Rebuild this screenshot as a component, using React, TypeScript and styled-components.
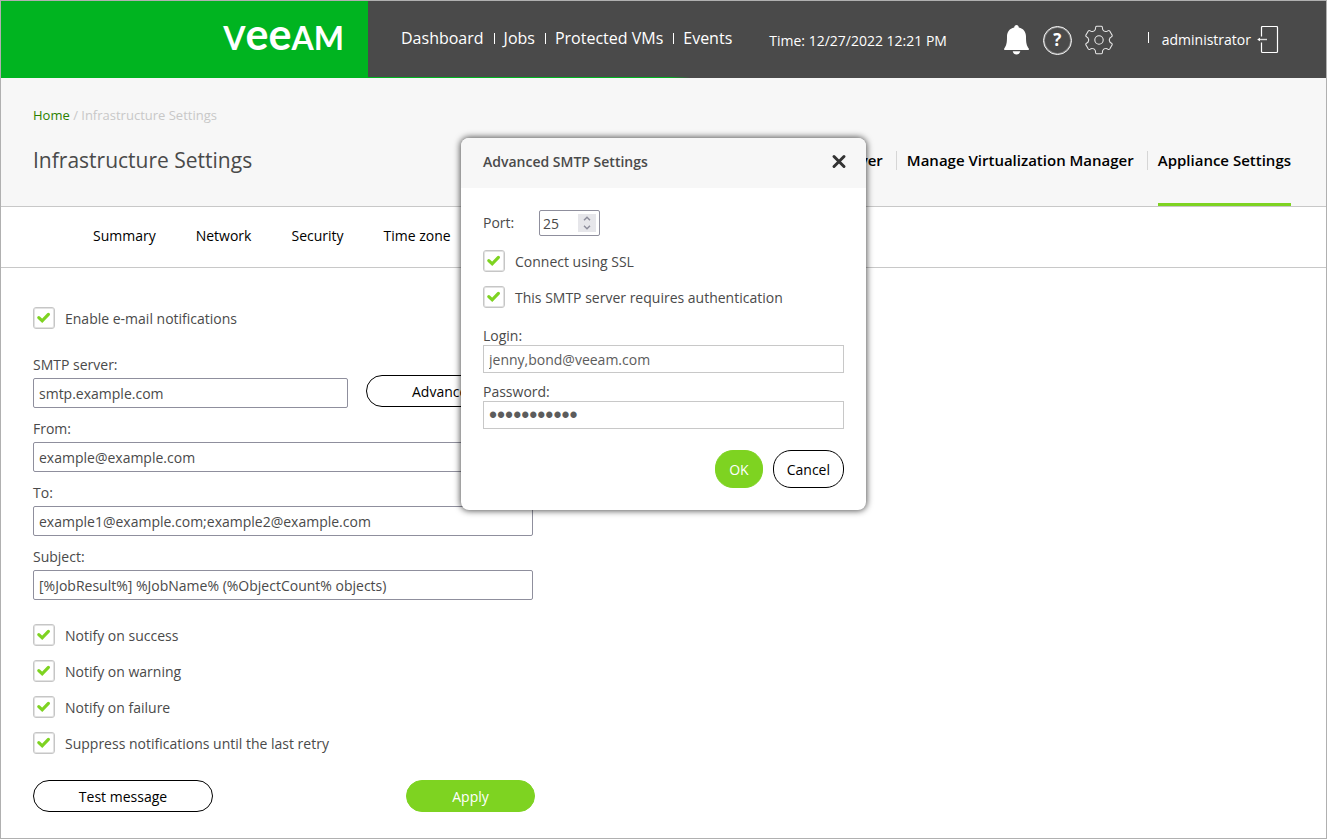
import React, { useState } from 'react';
import styled, { createGlobalStyle } from 'styled-components';

const GlobalStyle = createGlobalStyle`
  *, *::before, *::after { box-sizing: border-box; }
  body {
    margin: 0;
    background: #ffffff;
    color: #4a4a4a;
    font-family: "Open Sans", "Noto Sans", sans-serif;
    font-size: 14px;
    line-height: 20px;
  }
  button, input { font-family: inherit; font-size: 14px; line-height: 20px; }
  a { text-decoration: none; }
`;

const Page = styled.div`
  min-height: 100vh;
  border: 1px solid #b0b0b0;
`;

const TopBar = styled.header`
  position: relative;
  display: flex;
  align-items: stretch;
  height: 77px;
  background: #4a4a4a;
  color: #ffffff;

  &::after {
    content: "";
    position: absolute;
    left: 0;
    bottom: 0;
    width: 52%;
    height: 1px;
    background: linear-gradient(to right, #00b420 97%, #4a4a4a);
  }
`;

const Brand = styled.a`
  display: flex;
  justify-content: flex-end;
  flex: 0 0 367px;
  padding: 11px 24px 0 0;
  background: #00b420;
  color: #ffffff;
`;

const Wordmark = styled.span`
  font-family: Lato, sans-serif;
  font-size: 32px;
  font-weight: 700;
  line-height: 44px;
  white-space: nowrap;
`;

const TallLetters = styled.span`
  font-size: 43px;
  line-height: 44px;
`;

const MainNav = styled.nav`
  display: flex;
  align-items: center;
  padding: 0 0 3px 33px;
  font-size: 16px;
`;

const NavLink = styled.a`
  color: #ffffff;
  white-space: nowrap;

  & + &::before {
    content: "";
    display: inline-block;
    width: 1px;
    height: 11px;
    margin: 0 9px 0 10px;
    background: #ffffff;
  }
`;

const Clock = styled.div`
  align-self: center;
  margin: 2px 0 0 37px;
  white-space: nowrap;
`;

const Tools = styled.div`
  display: flex;
  align-items: center;
  gap: 12px;
  margin: 1px 0 0 auto;
`;

const IconButton = styled.button`
  display: flex;
  padding: 0;
  border: 0;
  background: none;
  color: inherit;
  cursor: pointer;
`;

const Account = styled.div`
  display: flex;
  align-items: center;
  gap: 6px;
  margin: 0 47px 0 34px;

  &::before {
    content: "";
    width: 1px;
    height: 11px;
    margin: 0 7px 5px 0;
    background: #ffffff;
  }
`;

const PageHead = styled.section`
  height: 129px;
  padding: 27px 35px 0 32px;
  background: #f7f7f7;
  border-bottom: 1px solid #c8c8c8;
`;

const Breadcrumb = styled.nav`
  font-size: 13px;
  color: #c8c8c8;
`;

const HomeLink = styled.a`
  color: #2a8000;
`;

const TitleRow = styled.div`
  display: flex;
  justify-content: space-between;
  padding-top: 20px;
`;

const Title = styled.h1`
  margin: 0;
  font-size: 21px;
  font-weight: 400;
  line-height: 30px;
`;

const SectionTabs = styled.nav`
  display: flex;
`;

const SectionTab = styled.a<{ $active?: boolean }>`
  height: 61px;
  border-bottom: 3px solid ${(p) => (p.$active ? '#7ed321' : 'transparent')};
  color: #000000;
  font-size: 15px;
  font-weight: 600;
  line-height: 30px;
  white-space: nowrap;
`;

const TabDivider = styled.span`
  width: 1px;
  height: 19px;
  margin: 6px 10px 0 13px;
  background: #d6d6d6;
`;

const SubNav = styled.nav`
  display: flex;
  align-items: center;
  gap: 40px;
  height: 61px;
  padding: 0 92px 2px;
  border-bottom: 1px solid #c8c8c8;
`;

const SubLink = styled.a`
  color: #000000;
`;

const Form = styled.form`
  max-width: 600px;
  padding: 39px 32px 26px;
`;

const CheckRow = styled.label`
  display: grid;
  grid-template-columns: 22px 1fr;
  column-gap: 10px;
  align-items: center;

  & + & { margin-top: 14px; }
`;

const CheckBox = styled.input`
  grid-area: 1 / 1;
  appearance: none;
  width: 22px;
  height: 22px;
  margin: 0;
  border: 1px solid #c6c6c6;
  border-radius: 3px;
  box-shadow: inset 0 0 0 1px #e2e2e2;

  &:not(:checked) + svg { visibility: hidden; }
`;

const CheckMark = styled.svg`
  grid-area: 1 / 1;
  pointer-events: none;
`;

const CheckText = styled.span`
  grid-area: 1 / 2;
  padding-top: 2px;
`;

const Fields = styled.div`
  display: flex;
  flex-direction: column;
  gap: 11px;
  max-width: 500px;
  padding: 26px 0 24px;
`;

const FieldLabel = styled.label`
  display: block;
  margin-bottom: 3px;
`;

const ServerRow = styled.div`
  display: flex;
  gap: 18px;
`;

const TextInput = styled.input`
  width: 100%;
  height: 30px;
  padding: 1px 5px 0;
  border: 1px solid #8f8f9d;
  border-radius: 2px;
  background: #ffffff;
  color: #4a4a4a;
`;

const ServerInput = styled(TextInput)`
  flex: 0 0 315px;
  width: 315px;
`;

const PillButton = styled.button<{ $primary?: boolean }>`
  height: 32px;
  padding: 2px 13px 0;
  border: 1px solid ${(p) => (p.$primary ? '#7ed321' : '#000000')};
  border-radius: 18px;
  background: ${(p) => (p.$primary ? '#7ed321' : '#ffffff')};
  color: ${(p) => (p.$primary ? '#ffffff' : '#000000')};
  cursor: pointer;
`;

const AdvancedButton = styled(PillButton)`
  flex: 1;
  margin-top: -3px;
`;

const FormActions = styled.div`
  display: flex;
  justify-content: space-between;
  max-width: 502px;
  padding-top: 26px;
`;

const TestButton = styled(PillButton)`
  width: 180px;
`;

const ApplyButton = styled(PillButton)`
  width: 129px;
`;

const Overlay = styled.div`
  position: absolute;
  top: 138px;
  left: 0;
  right: 0;
  display: flex;
  justify-content: center;
  pointer-events: none;
`;

const Dialog = styled.div`
  width: 405px;
  border-radius: 8px;
  overflow: hidden;
  background: #ffffff;
  box-shadow: 0 0 6px 1px rgba(0, 0, 0, 0.65);
  pointer-events: auto;
`;

const DialogHead = styled.div`
  display: flex;
  align-items: center;
  justify-content: space-between;
  height: 50px;
  padding: 0 19px 3px 22px;
  background: #f7f7f7;
`;

const DialogTitle = styled.h2`
  margin: 0;
  font-size: 14px;
  font-weight: 600;
  line-height: 20px;
`;

const DialogBody = styled.form`
  padding: 22px;
`;

const PortRow = styled.div`
  display: flex;
  align-items: center;
  margin-bottom: 14px;
`;

const PortLabel = styled.label`
  width: 56px;
`;

const PortBox = styled.div`
  display: flex;
  align-items: center;
  width: 61px;
  height: 26px;
  padding: 0 3px;
  border: 1px solid #8f8f9d;
  border-radius: 2px;
`;

const PortInput = styled.input`
  flex: 1;
  min-width: 0;
  height: 24px;
  padding: 1px 0 0;
  border: 0;
  background: none;
  color: #4a4a4a;
  appearance: textfield;

  &::-webkit-inner-spin-button { appearance: none; margin: 0; }
`;

const Stepper = styled.div`
  display: flex;
  flex-direction: column;
  width: 18px;
  background: #e6e6ea;
`;

const StepButton = styled(IconButton)`
  justify-content: center;
  align-items: center;
  height: 9px;
  color: #8f8f9d;
`;

const Credentials = styled.div`
  display: flex;
  flex-direction: column;
  gap: 9px;
  padding: 18px 0 21px;
`;

const TightLabel = styled.label`
  display: block;
  line-height: 19px;
`;

const DialogInput = styled.input`
  display: block;
  width: 100%;
  height: 28px;
  padding: 1px 5px 0;
  border: 1px solid #c8c8c8;
  background: #ffffff;
  color: #5c5c5c;
`;

const SecretInput = styled(DialogInput)`
  font-family: "Liberation Sans", sans-serif;
  font-size: 23px;
`;

const DialogActions = styled.div`
  display: flex;
  justify-content: flex-end;
  gap: 10px;
`;

const DialogButton = styled(PillButton)`
  height: 38px;
`;

const Bell = () => (
  <svg width="28" height="30" viewBox="0 0 28 30" fill="currentColor" aria-hidden="true">
    <path d="M13.500 0c1.300 0 2.200 1 2.300 2.500 4.700 1 7.200 4.500 7.200 9.300 0 6 .6 9 2.800 11.800v1.500H1.200v-1.500C3.400 20.800 4 17.800 4 11.800c0-4.800 2.500-8.300 7.200-9.300C11.300 1 12.200 0 13.500 0z" />
    <path d="M9.700 26.200h7.600c-.4 2-1.900 3.300-3.800 3.300s-3.400-1.300-3.800-3.300z" />
  </svg>
);

const HelpRing = styled.span`
  display: flex;
  align-items: center;
  justify-content: center;
  width: 29px;
  height: 29px;
  border: 1px solid #ffffff;
  border-radius: 50%;
  box-shadow: inset 0 0 0 1px rgba(255, 255, 255, 0.35);
  font-size: 17px;
  font-weight: 700;
`;

const gearPath = (() => {
  const points: string[] = [];
  for (let i = 0; i < 6; i++) {
    const base = (i * 60 - 90) * (Math.PI / 180);
    const at = (r: number, deg: number) => {
      const a = base + (deg * Math.PI) / 180;
      return `${(15 + r * Math.cos(a)).toFixed(1)} ${(15 + r * Math.sin(a)).toFixed(1)}`;
    };
    points.push(
      `${i === 0 ? 'M' : 'L'}${at(10.8, -22)} Q${at(11.4, -17)} ${at(12.6, -16)} Q${at(14, -15)} ${at(14, -10)} L${at(14, 10)} Q${at(14, 15)} ${at(12.6, 16)} Q${at(11.4, 17)} ${at(10.8, 22)} Q${at(9.8, 30)} ${at(10.8, 38)}`
    );
  }
  return points.join(' ') + 'Z';
})();

const Gear = () => (
  <svg width="30" height="30" viewBox="0 0 30 30" fill="none" stroke="#e6e6e6" strokeWidth="1.100" strokeLinejoin="round" aria-hidden="true">
    <path d={gearPath} />
    <circle cx="15" cy="15" r="4.200" />
  </svg>
);

const Logout = () => (
  <svg width="22" height="28" viewBox="0 0 22 28" fill="none" stroke="currentColor" aria-hidden="true">
    <path d="M4.500 10.500v-9a1 1 0 0 1 1-1h14a1 1 0 0 1 1 1v24a1 1 0 0 1-1 1h-14a1 1 0 0 1-1-1v-9" strokeWidth="1.200" />
    <path d="M1.500 13.500H10" stroke="#d8d8d8" strokeWidth="1.400" />
    <path d="M3 11.800v3.400L.2 13.500z" fill="currentColor" stroke="none" />
  </svg>
);

const Cross = () => (
  <svg width="16" height="16" viewBox="0 0 16 16" fill="none" stroke="#333333" strokeWidth="3" strokeLinecap="round" aria-hidden="true">
    <path d="M3 2.500l10 10M13 2.500l-10 10" />
  </svg>
);

const Chevron = ({ down }: { down?: boolean }) => (
  <svg width="8" height="5" viewBox="0 0 8 5" fill="none" stroke="currentColor" strokeWidth="1.500" aria-hidden="true">
    <path d={down ? 'M1 .7l3 3 3-3' : 'M1 4.300l3-3 3 3'} />
  </svg>
);

function Check({ label }: { label: string }) {
  return (
    <CheckRow>
      <CheckBox type="checkbox" defaultChecked />
      <CheckMark width="22" height="22" viewBox="0 0 22 22" fill="none" stroke="#7ed321" strokeWidth="3.200" strokeLinecap="round" aria-hidden="true">
        <path d="M5.800 10.600l3.400 3.200 6.200-6.400" />
      </CheckMark>
      <CheckText>{label}</CheckText>
    </CheckRow>
  );
}

function Field({ id, label, value }: { id: string; label: string; value: string }) {
  return (
    <div>
      <FieldLabel htmlFor={id}>{label}</FieldLabel>
      <TextInput id={id} type="text" defaultValue={value} />
    </div>
  );
}

function SmtpDialog({ onClose }: { onClose: () => void }) {
  const [port, setPort] = useState(25);
  return (
    <Overlay>
      <Dialog role="dialog" aria-labelledby="smtp-title">
        <DialogHead>
          <DialogTitle id="smtp-title">Advanced SMTP Settings</DialogTitle>
          <IconButton type="button" aria-label="Close" onClick={onClose}><Cross /></IconButton>
        </DialogHead>
        <DialogBody onSubmit={(e) => { e.preventDefault(); onClose(); }}>
          <PortRow>
            <PortLabel htmlFor="port">Port:</PortLabel>
            <PortBox>
              <PortInput id="port" type="number" value={port} onChange={(e) => setPort(Number(e.target.value))} />
              <Stepper>
                <StepButton type="button" aria-label="Increase port" onClick={() => setPort(port + 1)}><Chevron /></StepButton>
                <StepButton type="button" aria-label="Decrease port" onClick={() => setPort(port - 1)}><Chevron down /></StepButton>
              </Stepper>
            </PortBox>
          </PortRow>
          <Check label="Connect using SSL" />
          <Check label="This SMTP server requires authentication" />
          <Credentials>
            <div>
              <TightLabel htmlFor="login">Login:</TightLabel>
              <DialogInput id="login" type="text" defaultValue="jenny,bond@veeam.com" />
            </div>
            <div>
              <TightLabel htmlFor="password">Password:</TightLabel>
              <SecretInput id="password" type="password" defaultValue="smtpsecret1" />
            </div>
          </Credentials>
          <DialogActions>
            <DialogButton $primary type="submit">OK</DialogButton>
            <DialogButton type="button" onClick={onClose}>Cancel</DialogButton>
          </DialogActions>
        </DialogBody>
      </Dialog>
    </Overlay>
  );
}

export default function App() {
  const [dialogOpen, setDialogOpen] = useState(true);
  return (
    <>
      <GlobalStyle />
      <Page>
        <TopBar>
          <Brand href="#" aria-label="Veeam">
            <Wordmark>V<TallLetters>ee</TallLetters>AM</Wordmark>
          </Brand>
          <MainNav>
            {['Dashboard', 'Jobs', 'Protected VMs', 'Events'].map((item) => (
              <NavLink key={item} href="#">{item}</NavLink>
            ))}
          </MainNav>
          <Clock>Time: 12/27/2022 12:21 PM</Clock>
          <Tools>
            <IconButton type="button" aria-label="Notifications"><Bell /></IconButton>
            <IconButton type="button" aria-label="Help"><HelpRing>?</HelpRing></IconButton>
            <IconButton type="button" aria-label="Settings"><Gear /></IconButton>
          </Tools>
          <Account>
            <span>administrator</span>
            <IconButton type="button" aria-label="Log out"><Logout /></IconButton>
          </Account>
        </TopBar>
        <PageHead>
          <Breadcrumb><HomeLink href="#">Home</HomeLink> / Infrastructure Settings</Breadcrumb>
          <TitleRow>
            <Title>Infrastructure Settings</Title>
            <SectionTabs>
              <SectionTab href="#">Manage Backup Server</SectionTab>
              <TabDivider />
              <SectionTab href="#">Manage Virtualization Manager</SectionTab>
              <TabDivider />
              <SectionTab href="#" $active>Appliance Settings</SectionTab>
            </SectionTabs>
          </TitleRow>
        </PageHead>
        <SubNav>
          {['Summary', 'Network', 'Security', 'Time zone'].map((item) => (
            <SubLink key={item} href="#">{item}</SubLink>
          ))}
        </SubNav>
        <Form onSubmit={(e) => e.preventDefault()}>
          <Check label="Enable e-mail notifications" />
          <Fields>
            <div>
              <FieldLabel htmlFor="server">SMTP server:</FieldLabel>
              <ServerRow>
                <ServerInput id="server" type="text" defaultValue="smtp.example.com" />
                <AdvancedButton type="button" onClick={() => setDialogOpen(true)}>Advanced...</AdvancedButton>
              </ServerRow>
            </div>
            <Field id="from" label="From:" value="example@example.com" />
            <Field id="to" label="To:" value="example1@example.com;example2@example.com" />
            <Field id="subject" label="Subject:" value="[%JobResult%] %JobName% (%ObjectCount% objects)" />
          </Fields>
          <Check label="Notify on success" />
          <Check label="Notify on warning" />
          <Check label="Notify on failure" />
          <Check label="Suppress notifications until the last retry" />
          <FormActions>
            <TestButton type="button">Test message</TestButton>
            <ApplyButton $primary type="submit">Apply</ApplyButton>
          </FormActions>
        </Form>
      </Page>
      {dialogOpen && <SmtpDialog onClose={() => setDialogOpen(false)} />}
    </>
  );
}
